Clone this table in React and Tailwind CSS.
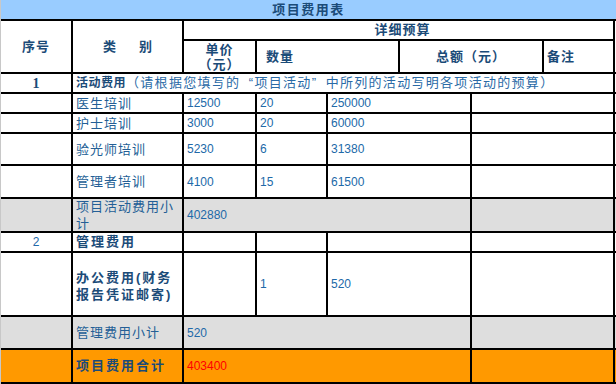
const FONT = { fontFamily: "'Liberation Sans', 'Noto Sans CJK SC', sans-serif" }

const Row = ({ h, bg = '', children }) => (
  <div className={`flex border-b-2 border-black ${h} ${bg}`}>{children}</div>
)

const Cell = ({ w, className = '', children }) => (
  <div className={`${w} shrink-0 border-r-2 border-black flex items-center overflow-hidden ${className}`}>
    {children}
  </div>
)

const Num = ({ children, className = 'text-[#2169a8]' }) => (
  <span className={`pl-[3px] text-[12px] ${className}`}>{children}</span>
)

const Label = ({ children }) => (
  <span className="pl-[3px] text-[13px] tracking-[1px] text-[#245f96] leading-[17px]">{children}</span>
)

const items = [
  { name: '医生培训', price: '12500', qty: '20', total: '250000', h: 'h-[20px]' },
  { name: '护士培训', price: '3000', qty: '20', total: '60000', h: 'h-[20px]' },
  { name: '验光师培训', price: '5230', qty: '6', total: '31380', h: 'h-[32px]' },
  { name: '管理者培训', price: '4100', qty: '15', total: '61500', h: 'h-[33px]' },
]

export default function App() {
  return (
    <div className="w-[616px] h-[384px] bg-white border-l border-[#c8c8c8] overflow-hidden" style={FONT}>
      {/* Title */}
      <div className="h-[21px] bg-[#99ccff] border-b-2 border-black flex items-center justify-center">
        <span className="text-[13px] font-bold tracking-[1.5px] text-[#1b4b78]">项目费用表</span>
      </div>

      {/* Header */}
      <div className="h-[53px] flex border-b-2 border-black font-bold text-[13px] text-[#1b4b78]">
        <Cell w="w-[72px]" className="justify-center tracking-[1px]">序号</Cell>
        <Cell w="w-[111px]" className="justify-center gap-[23px]">
          <span>类</span>
          <span>别</span>
        </Cell>
        <div className="w-[431px] flex flex-col">
          <div className="h-[20px] border-b-2 border-r-2 border-black flex items-center justify-center tracking-[1px] pl-2">
            详细预算
          </div>
          <div className="flex-1 flex">
            <Cell w="w-[73px]" className="flex-col justify-center leading-[15px] tracking-[1px]">
              <span>单价</span>
              <span>（元）</span>
            </Cell>
            <Cell w="w-[143px]" className="pl-[9px] tracking-[1px]">数量</Cell>
            <Cell w="w-[144px]" className="justify-center tracking-[1px]">总额（元）</Cell>
            <Cell w="w-[71px]" className="pl-[3px] tracking-[1px]">备注</Cell>
          </div>
        </div>
      </div>

      {/* Section 1 */}
      <Row h="h-[20px]">
        <Cell w="w-[72px]" className="justify-center">
          <span className="text-[14px] font-bold text-[#1b4b78]" style={{ fontFamily: "'Liberation Serif', serif" }}>1</span>
        </Cell>
        <Cell w="w-[542px]" className="pl-[3px] whitespace-nowrap">
          <span className="text-[12px] font-bold tracking-[0.5px] text-[#1b4b78]">活动费用</span>
          <span className="text-[13px] tracking-[1.3px] text-[#2a6aa6]">
            （请根据您填写的<span className="inline-block w-[14px] text-right">“</span>项目活动<span className="inline-block w-[14px] text-left">”</span>中所列的活动写明各项活动的预算）
          </span>
        </Cell>
      </Row>

      {items.map((it) => (
        <Row key={it.name} h={it.h}>
          <Cell w="w-[72px]" />
          <Cell w="w-[111px]"><Label>{it.name}</Label></Cell>
          <Cell w="w-[73px]"><Num>{it.price}</Num></Cell>
          <Cell w="w-[71px]"><Num>{it.qty}</Num></Cell>
          <Cell w="w-[144px]"><Num>{it.total}</Num></Cell>
          <Cell w="w-[143px]" />
        </Row>
      ))}

      <Row h="h-[34px]" bg="bg-[#dedede]">
        <Cell w="w-[72px]" />
        <Cell w="w-[111px]"><Label>项目活动费用小计</Label></Cell>
        <Cell w="w-[288px]"><Num>402880</Num></Cell>
        <Cell w="w-[143px]" />
      </Row>

      {/* Section 2 */}
      <Row h="h-[20px]">
        <Cell w="w-[72px]" className="justify-center">
          <span className="text-[12px] text-[#2169a8]">2</span>
        </Cell>
        <Cell w="w-[111px]">
          <span className="pl-[3px] text-[13px] font-bold tracking-[2px] text-[#1b4b78]">管理费用</span>
        </Cell>
        <Cell w="w-[73px]" />
        <Cell w="w-[71px]" />
        <Cell w="w-[144px]" />
        <Cell w="w-[143px]" />
      </Row>

      <Row h="h-[64px]">
        <Cell w="w-[72px]" />
        <Cell w="w-[111px]">
          <span className="pl-[3px] text-[13px] font-bold tracking-[2px] leading-[17px] text-[#1b4b78] mt-[3px]">
            办公费用(财务<br />报告凭证邮寄)
          </span>
        </Cell>
        <Cell w="w-[73px]" />
        <Cell w="w-[71px]"><Num>1</Num></Cell>
        <Cell w="w-[144px]"><Num>520</Num></Cell>
        <Cell w="w-[143px]" />
      </Row>

      <Row h="h-[33px]" bg="bg-[#dedede]">
        <Cell w="w-[72px]" />
        <Cell w="w-[111px]"><Label>管理费用小计</Label></Cell>
        <Cell w="w-[288px]"><Num>520</Num></Cell>
        <Cell w="w-[143px]" />
      </Row>

      <Row h="h-[34px]" bg="bg-[#ff9900]">
        <Cell w="w-[72px]" />
        <Cell w="w-[111px]">
          <span className="pl-[3px] text-[13px] font-bold tracking-[2px] text-[#1b4b78]">项目费用合计</span>
        </Cell>
        <Cell w="w-[288px]"><Num className="text-[#ff0000]">403400</Num></Cell>
        <Cell w="w-[143px]" />
      </Row>
    </div>
  )
}
